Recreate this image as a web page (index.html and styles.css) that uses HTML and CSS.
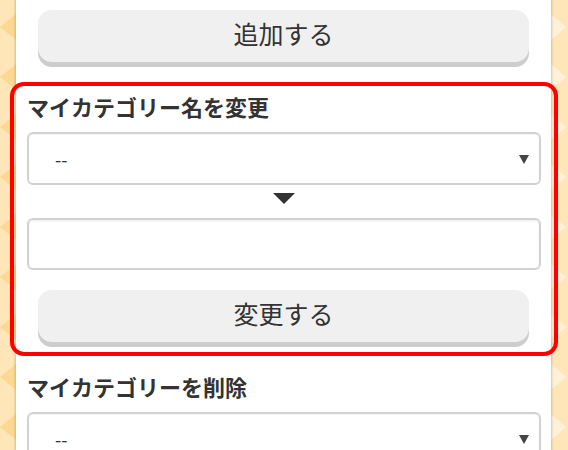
FILE: index.html
```html
<!DOCTYPE html>
<html lang="ja">
<head>
<meta charset="utf-8">
<link rel="stylesheet" href="styles.css">
</head>
<body>
<div class="page">
  <div class="side side-left">
    <svg width="16" height="450" viewBox="0 0 16 450">
      <defs>
        <pattern id="pl" x="0" y="2" width="16" height="50" patternUnits="userSpaceOnUse">
          <polygon points="0,25 16,12 16,38" fill="#fcd993"/>
        </pattern>
      </defs>
      <rect width="16" height="450" fill="#fee6b8"/>
      <rect width="16" height="450" fill="url(#pl)"/>
    </svg>
  </div>
  <main class="panel">
    <button class="btn" type="button">追加する</button>
    <section class="rename">
      <h2 class="label">マイカテゴリー名を変更</h2>
      <div class="select-wrap">
        <select class="select"><option>--</option></select>
      </div>
      <div class="down">
        <svg width="22" height="11" viewBox="0 0 22 11"><polygon points="0,0 22,0 11,11" fill="#333"/></svg>
      </div>
      <input class="text" type="text">
      <button class="btn" type="button">変更する</button>
    </section>
    <h2 class="label label-after">マイカテゴリーを削除</h2>
    <div class="select-wrap">
      <select class="select"><option>--</option></select>
    </div>
  </main>
  <div class="side side-right">
    <svg width="17" height="450" viewBox="0 0 17 450">
      <defs>
        <pattern id="pr" x="0" y="2" width="17" height="50" patternUnits="userSpaceOnUse">
          <polygon points="0,12 15,25 0,38" fill="#fff1d9"/>
        </pattern>
      </defs>
      <rect width="17" height="450" fill="#fee6b8"/>
      <rect width="17" height="450" fill="url(#pr)"/>
    </svg>
  </div>
</div>
</body>
</html>
```

FILE: styles.css
```css
* { box-sizing: border-box; }
html, body { margin: 0; padding: 0; }
body {
  background: #fee6b8;
  font-family: "Noto Sans CJK JP", "Noto Sans", sans-serif;
  color: #333;
}
.page {
  display: flex;
  width: 568px;
  height: 450px;
  overflow: hidden;
}
.side { flex: 0 0 auto; }
.side svg { display: block; }
.side-left { width: 16px; }
.side-right { width: 17px; }
.panel {
  flex: 1 1 auto;
  position: relative;
  z-index: 1;
  background: #fff;
  padding: 10px 10px 0 11px;
  box-shadow: 0 0 2px 1px rgba(150, 110, 40, 0.35);
}
.btn {
  display: block;
  margin: 0 12px 0 11px;
  width: calc(100% - 23px);
  height: 52px;
  border: 0;
  border-radius: 14px;
  background: #f0f0f0;
  box-shadow: 0 5px 0 #cdcdcd;
  font-family: "Noto Sans CJK JP", sans-serif;
  font-size: 25px;
  line-height: 46px;
  padding: 0 0 6px;
  color: #333;
}
.rename {
  margin: 20px -17px 0 -17px;
  border: 4px solid #ff0000;
  border-radius: 14px;
  padding: 5px 13px 10px 13px;
}
.label {
  margin: 0 0 11px;
  font-size: 22px;
  line-height: 30px;
  font-weight: 700;
  color: #333;
}
.label-after { margin-top: 15px; }
.select-wrap {
  position: relative;
}
.select-wrap::after {
  content: "";
  position: absolute;
  right: 12px;
  top: 23px;
  border-left: 5px solid transparent;
  border-right: 5px solid transparent;
  border-top: 9px solid #444;
}
.select {
  display: block;
  width: 100%;
  height: 53px;
  appearance: none;
  -webkit-appearance: none;
  background: #fff;
  border: 2px solid #d2d2d2;
  border-radius: 6px;
  padding: 0 0 0 26px;
  font-family: "Noto Sans CJK JP", sans-serif;
  font-size: 18px;
  color: #333;
  box-shadow: inset 0 1px 1px rgba(0,0,0,0.05);
}
.down {
  height: 33px;
  padding-top: 8px;
  display: flex;
  justify-content: center;
}
.down svg { display: block; }
.text {
  display: block;
  width: 100%;
  height: 52px;
  margin: 0 0 20px;
  border: 2px solid #d2d2d2;
  border-radius: 6px;
  background: #fff;
  box-shadow: inset 0 1px 2px rgba(0,0,0,0.08);
  font-size: 18px;
}
```
